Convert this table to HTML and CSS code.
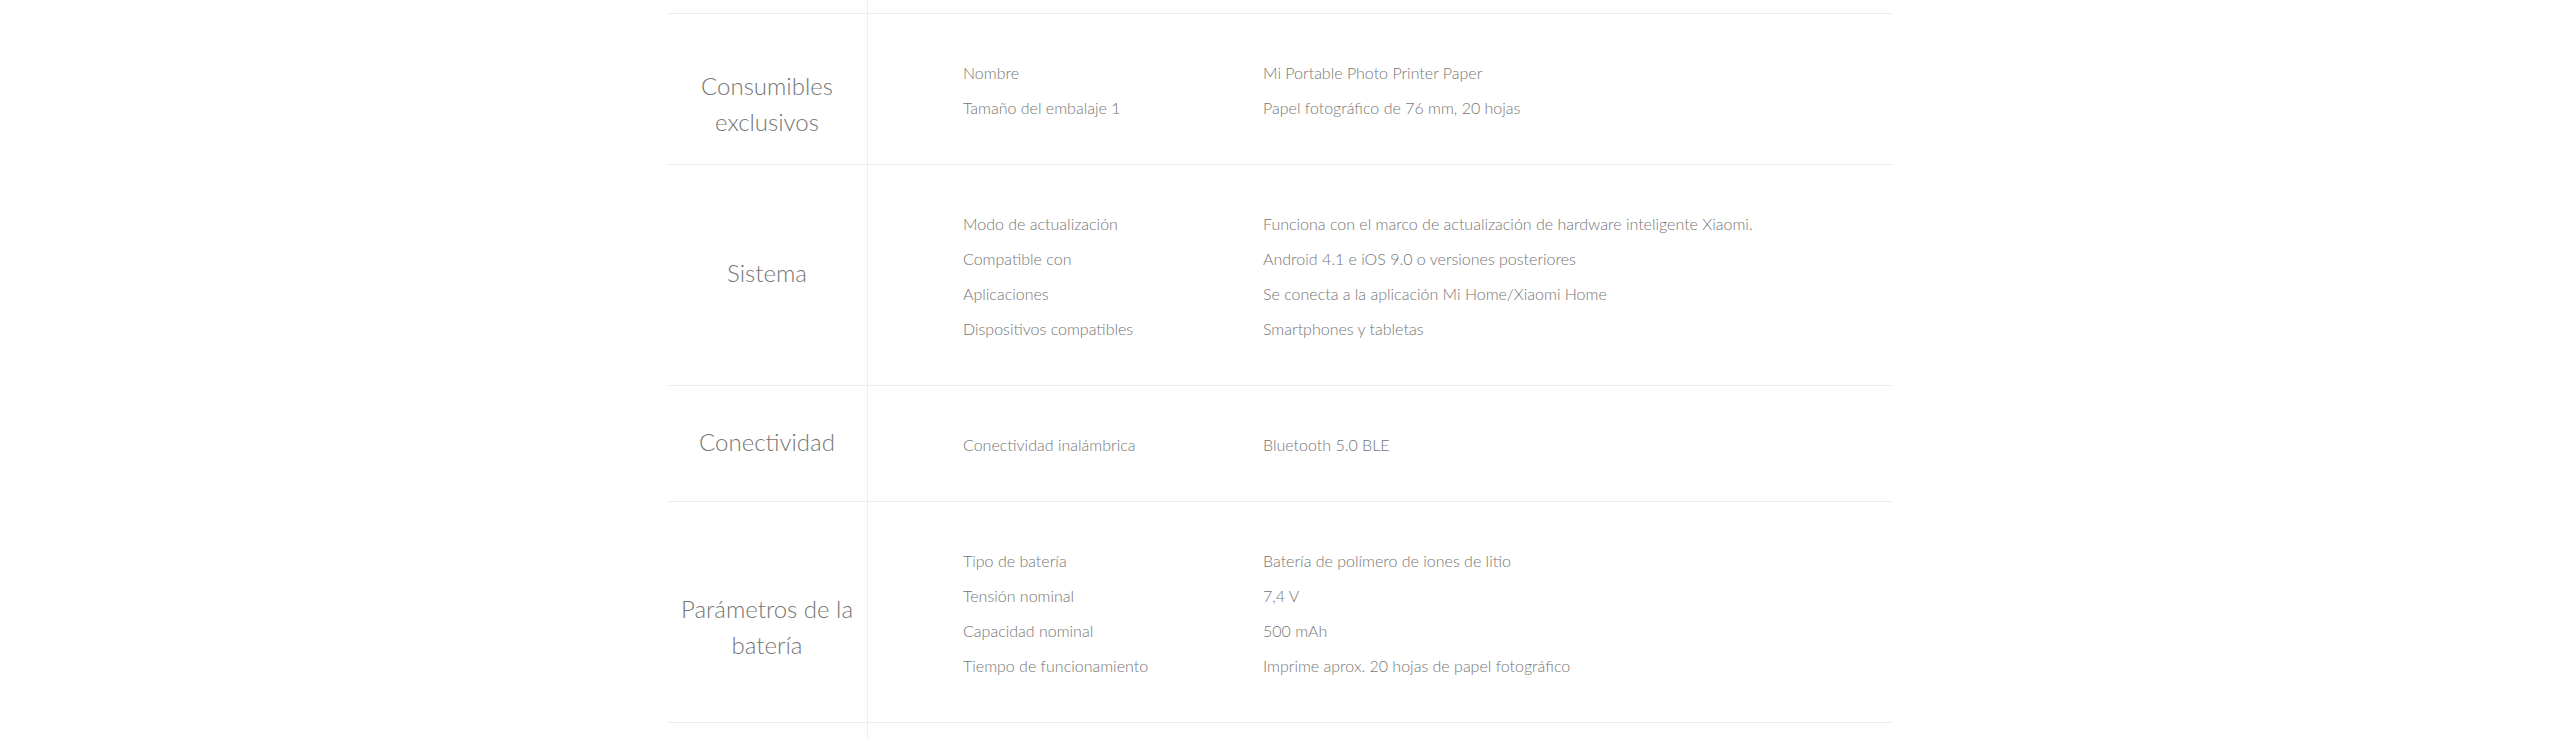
FILE: index.html
```html
<!DOCTYPE html>
<html lang="es">
<head>
<meta charset="utf-8">
<title>Especificaciones</title>
<link rel="stylesheet" href="styles.css">
</head>
<body>
<div class="specs">
  <div class="row row-tail">
    <div class="row-title"></div>
    <div class="row-body"></div>
  </div>

  <div class="row">
    <div class="row-title row-title-wrap">Consumibles exclusivos</div>
    <div class="row-body">
      <div class="item"><span class="item-label">Nombre</span><span class="item-value">Mi Portable Photo Printer Paper</span></div>
      <div class="item"><span class="item-label">Tamaño del embalaje 1</span><span class="item-value">Papel fotográfico de 76 mm, 20 hojas</span></div>
    </div>
  </div>

  <div class="row">
    <div class="row-title">Sistema</div>
    <div class="row-body">
      <div class="item"><span class="item-label">Modo de actualización</span><span class="item-value">Funciona con el marco de actualización de hardware inteligente Xiaomi.</span></div>
      <div class="item"><span class="item-label">Compatible con</span><span class="item-value">Android 4.1 e iOS 9.0 o versiones posteriores</span></div>
      <div class="item"><span class="item-label">Aplicaciones</span><span class="item-value">Se conecta a la aplicación Mi Home/Xiaomi Home</span></div>
      <div class="item"><span class="item-label">Dispositivos compatibles</span><span class="item-value">Smartphones y tabletas</span></div>
    </div>
  </div>

  <div class="row">
    <div class="row-title">Conectividad</div>
    <div class="row-body">
      <div class="item"><span class="item-label">Conectividad inalámbrica</span><span class="item-value">Bluetooth 5.0 BLE</span></div>
    </div>
  </div>

  <div class="row">
    <div class="row-title row-title-wrap">Parámetros de la batería</div>
    <div class="row-body">
      <div class="item"><span class="item-label">Tipo de batería</span><span class="item-value">Batería de polímero de iones de litio</span></div>
      <div class="item"><span class="item-label">Tensión nominal</span><span class="item-value">7,4 V</span></div>
      <div class="item"><span class="item-label">Capacidad nominal</span><span class="item-value">500 mAh</span></div>
      <div class="item"><span class="item-label">Tiempo de funcionamiento</span><span class="item-value">Imprime aprox. 20 hojas de papel fotográfico</span></div>
    </div>
  </div>

  <div class="row">
    <div class="row-title"></div>
    <div class="row-body row-body-next"></div>
  </div>
</div>
</body>
</html>
```

FILE: styles.css
```css
* {
  box-sizing: border-box;
}

html,
body {
  margin: 0;
  padding: 0;
  background: #fff;
}

body {
  font-family: Lato, "Liberation Sans", sans-serif;
  font-weight: 300;
  color: #757575;
  overflow: hidden;
}

.specs {
  width: 1226px;
  margin: 0 auto;
}

.row {
  display: grid;
  grid-template-columns: 201px 1fr;
  border-bottom: 1px solid #eeeeee;
}

.row-title {
  display: flex;
  align-items: center;
  justify-content: center;
  text-align: center;
  padding: 0 10px 4px;
  border-right: 1px solid #eeeeee;
  font-size: 24px;
  line-height: 36px;
  color: #757575;
}

.row-title-wrap {
  padding-top: 34px;
}

.row-body {
  padding: 41px 0 39px 95px;
}

.row-tail .row-body {
  padding: 0;
  height: 13px;
}

.row-body-next {
  height: 80px;
}

.item {
  display: grid;
  grid-template-columns: 300px 1fr;
  font-size: 16px;
  line-height: 35px;
}

.item-label,
.item-value {
  white-space: nowrap;
}
```
